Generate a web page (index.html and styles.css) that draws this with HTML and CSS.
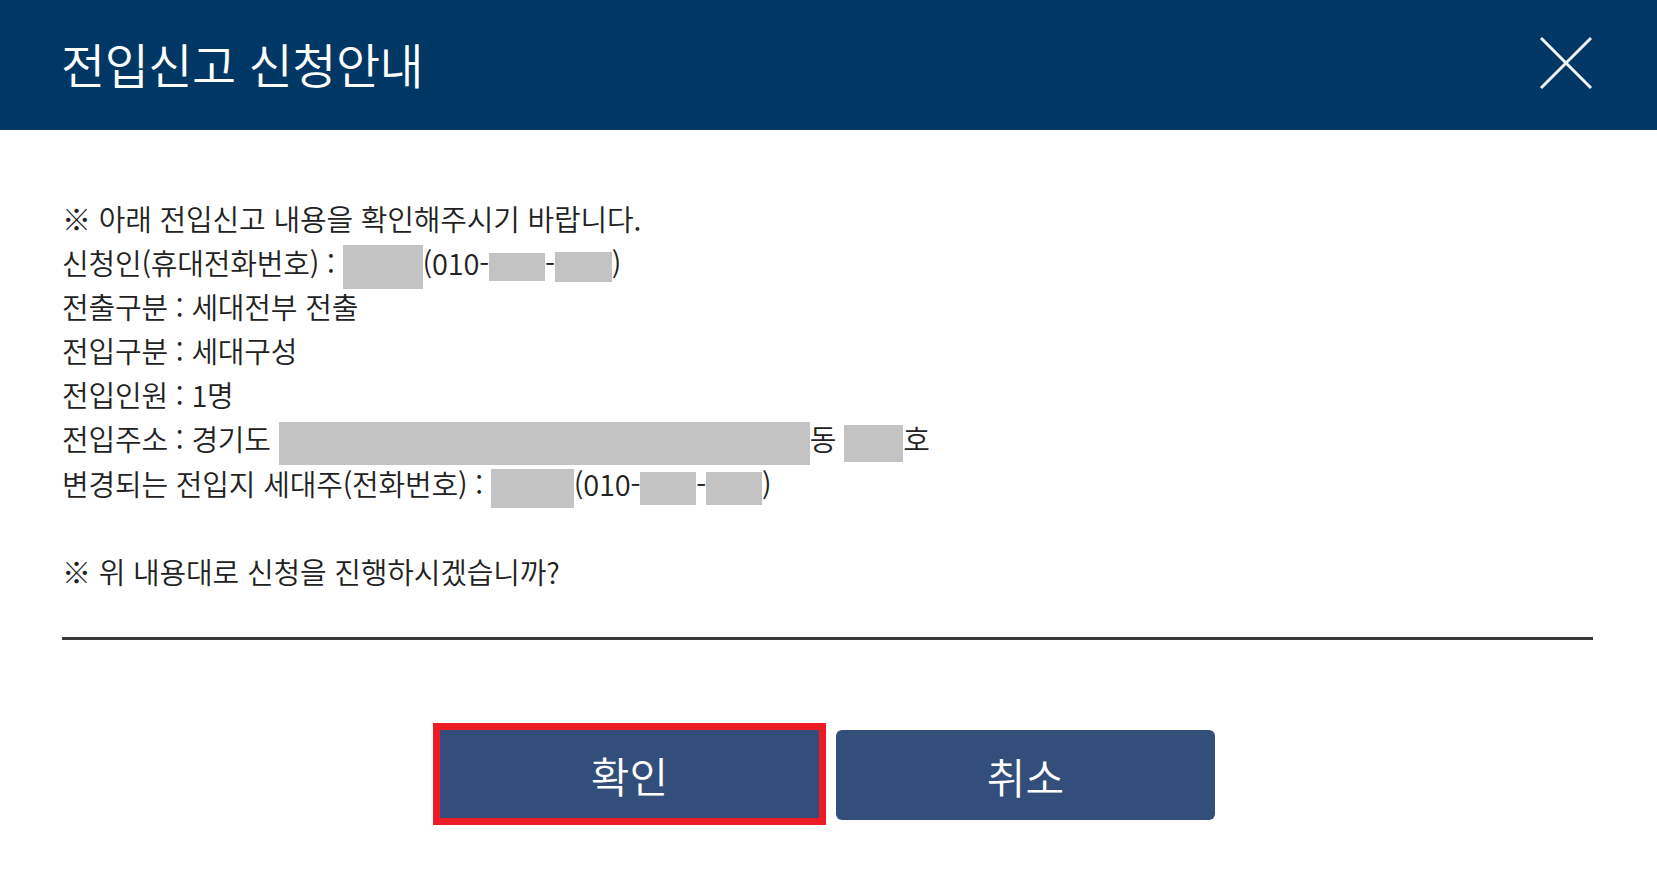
FILE: index.html
```html
<!DOCTYPE html>
<html lang="ko">
<head>
    <meta charset="UTF-8">
    <meta name="viewport" content="width=device-width, initial-scale=1.0">
    <title>전입신고 신청안내</title>
    <link rel="stylesheet" href="styles.css">
</head>
<body>

    <div id="header">
        <h1>전입신고 신청안내</h1>
        <button class="close" aria-label="닫기">
            <svg width="54" height="54" viewBox="0 0 54 54">
                <path d="M2 2 L52 52 M52 2 L2 52" stroke="#f2f5f8" stroke-width="3" fill="none"/>
            </svg>
        </button>
    </div>

    <div id="content">
        <div class="info">
            <p>※ 아래 전입신고 내용을 확인해주시기 바랍니다.</p>
            <p>신청인(휴대전화번호) : <span class="mask m-name"></span>(010-<span class="mask m-num"></span>-<span class="mask m-num2"></span>)</p>
            <p>전출구분 : 세대전부 전출</p>
            <p>전입구분 : 세대구성</p>
            <p>전입인원 : 1명</p>
            <p>전입주소 : 경기도 <span class="mask m-addr"></span>동 <span class="mask m-ho"></span>호</p>
            <p class="last">변경되는 전입지 세대주(전화번호) : <span class="mask m-name2"></span>(010-<span class="mask m-num3"></span>-<span class="mask m-num3"></span>)</p>
            <p class="ask">※ 위 내용대로 신청을 진행하시겠습니까?</p>
        </div>

        <div class="buttons">
            <button class="btn btn-ok">확인</button>
            <button class="btn">취소</button>
        </div>
    </div>

</body>
</html>
```

FILE: styles.css
```css
body {
    font-family: "Noto Sans CJK KR", "Noto Sans", sans-serif;
    background: white;
    color: #222;
    margin: 0;
}

#header {
    display: flex;
    align-items: center;
    justify-content: space-between;
    height: 125px;
    padding: 0 64px 5px 61px;
    background: #003764;
}

#header h1 {
    margin: 0;
    color: white;
    font-size: 48px;
    font-weight: 350;
    letter-spacing: -0.5px;
}

.close {
    background: none;
    border: none;
    padding: 0;
    width: 54px;
    height: 54px;
    cursor: pointer;
}

.close svg {
    display: block;
}

#content {
    padding: 66px 64px 50px 62px;
}

.info {
    border-bottom: 3px solid #3a3a3a;
    padding-bottom: 44px;
}

.info p {
    margin: 0;
    height: 44px;
    font-size: 29px;
    font-weight: 350;
    line-height: 44px;
    letter-spacing: -0.2px;
    white-space: nowrap;
}

.info .last {
    margin-top: 1px;
}

.info .ask {
    margin-top: 44px;
}

.mask {
    display: inline-block;
    vertical-align: middle;
    background: #c3c3c3;
}

.m-name { width: 80px; height: 44px; }
.m-num { width: 56px; height: 28px; }
.m-num2 { width: 57px; height: 30px; }
.m-addr { width: 531px; height: 43px; }
.m-ho { width: 59px; height: 37px; }
.m-name2 { width: 83px; height: 39px; }
.m-num3 { width: 56px; height: 33px; }

.buttons {
    display: flex;
    justify-content: center;
    align-items: flex-start;
    gap: 17px;
    margin-top: 90px;
}

.btn {
    width: 379px;
    height: 90px;
    background: #344e7b;
    color: white;
    border: none;
    border-radius: 6px;
    font-family: inherit;
    font-size: 42px;
    font-weight: 350;
    cursor: pointer;
}

.btn-ok {
    height: 88px;
    border-radius: 0;
    outline: 7px solid #ed1c24;
}
```
